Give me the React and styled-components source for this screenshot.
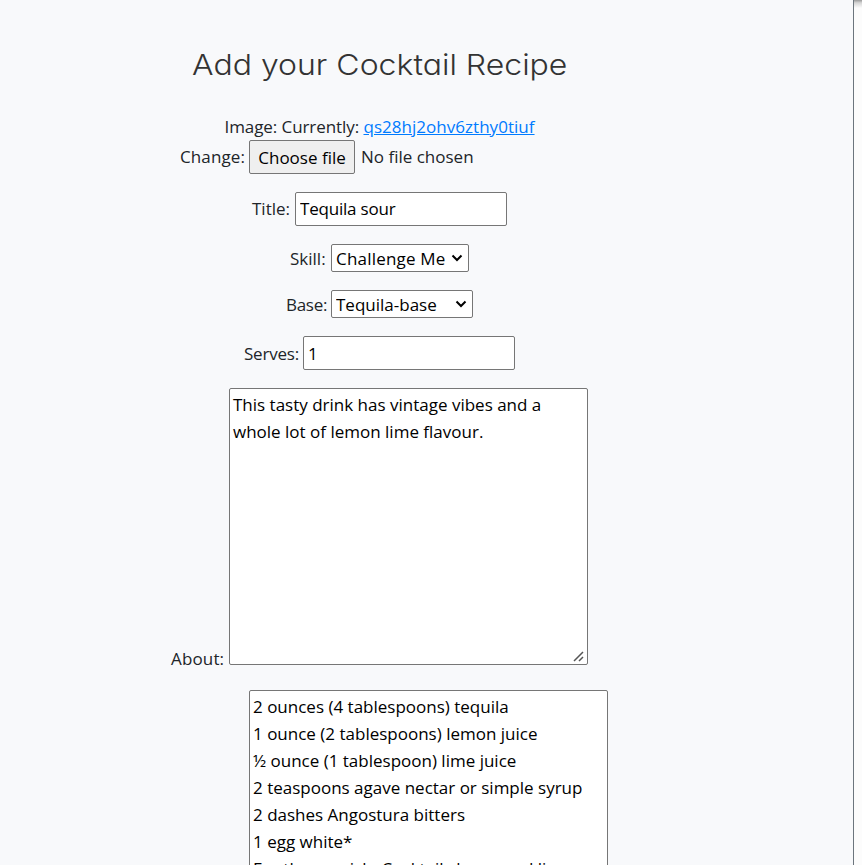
import React from "react";
import styled, { createGlobalStyle } from "styled-components";

const Global = createGlobalStyle`
  * { box-sizing: border-box; }
  html, body { margin: 0; overflow: hidden; }
  body { background: #fcfcfc; }
`;

const Shell = styled.div`
  display: flex;
  width: 862px;
  height: 865px;
  overflow: hidden;
`;

const Page = styled.main`
  flex: none;
  width: 854px;
  background: #f8f9fb;
  border-right: 1px solid #6c757d;
  color: #212529;
  font: 400 17px/27px "Open Sans", "Noto Sans", sans-serif;
`;

const Edge = styled.div`
  flex: 1;
  height: 8px;
  background: linear-gradient(#9a9a9a, #d5d5d5 35%, #fcfcfc);
`;

const Form = styled.form`
  width: 759px;
  padding-top: 42px;
  display: flex;
  flex-direction: column;
  align-items: center;
`;

const Heading = styled.h1`
  margin: 0 0 29px;
  width: 376px;
  height: 43px;
  font: 300 29px/45px Inter, sans-serif;
  font-feature-settings: "cv11";
  white-space: nowrap;
  color: #333;
  transform: scaleX(1.103);
  transform-origin: left;
`;

const Row = styled.div`
  display: flex;
  align-items: ${(p) => p.$align || "center"};
  height: ${(p) => p.$height}px;
  margin-bottom: ${(p) => (p.$gap === undefined ? 18 : p.$gap)}px;
  padding-left: ${(p) => p.$indent || 0}px;
`;

const Text = styled.label`
  flex: none;
  width: ${(p) => p.$width}px;
  padding-bottom: ${(p) => (p.$lift === undefined ? 2 : p.$lift)}px;
  margin-bottom: ${(p) => p.$drop || 0}px;
  letter-spacing: ${(p) => p.$tracking || 0}px;
  white-space: nowrap;
`;

const Link = styled.a`
  width: 171px;
  padding-bottom: 2px;
  color: #007bff;
  letter-spacing: 0.03px;
  text-decoration: underline;
  white-space: nowrap;
`;

const FileButton = styled.button`
  width: 106px;
  height: 34px;
  margin-right: 6px;
  padding: 0;
  border: 1px solid #767676;
  border-radius: 2px;
  background: #efefef;
  color: #000;
  font: inherit;
  white-space: nowrap;
`;

const Input = styled.input`
  width: 212px;
  height: 34px;
  padding: ${(p) => (p.$low ? "0 4px" : "0 4px 2px")};
  border: 1px solid #767676;
  border-radius: 2px;
  background: #fff;
  color: #000;
  font: inherit;
  letter-spacing: -0.2px;
`;

const SelectBox = styled.span`
  position: relative;
  display: flex;
  width: ${(p) => p.$width}px;
  height: 28px;
`;

const Select = styled.select`
  appearance: none;
  width: 100%;
  padding: 0 4px;
  border: 1px solid #767676;
  border-radius: 2px;
  background: #fff;
  color: #000;
  font: inherit;
  letter-spacing: ${(p) => p.$tracking}px;
`;

const Chevron = styled.svg`
  position: absolute;
  right: 6px;
  top: 10px;
  pointer-events: none;
`;

const AreaBox = styled.div`
  position: relative;
  width: 359px;
  height: 277px;
`;

const Area = styled.textarea`
  display: block;
  width: 100%;
  height: 100%;
  padding: 2px 3px;
  border: 1px solid #767676;
  border-radius: 2px;
  background: #fff;
  color: #000;
  font: inherit;
  overflow: hidden;
  resize: none;
`;

const Grip = styled.svg`
  position: absolute;
  right: 3px;
  bottom: 3px;
`;

const ingredients = `2 ounces (4 tablespoons) tequila
1 ounce (2 tablespoons) lemon juice
½ ounce (1 tablespoon) lime juice
2 teaspoons agave nectar or simple syrup
2 dashes Angostura bitters
1 egg white*
For the garnish: Cocktail cherry and lime`;

const about = `This tasty drink has vintage vibes and a
whole lot of lemon lime flavour.`;

function Dropdown({ width, value, tracking }) {
  return (
    <SelectBox $width={width}>
      <Select $tracking={tracking}>
        <option>{value}</option>
      </Select>
      <Chevron width="12" height="8" viewBox="0 0 12 8">
        <path d="M1.5 1.5 6 6l4.5-4.5" fill="none" stroke="#000" strokeWidth="2" />
      </Chevron>
    </SelectBox>
  );
}

function TextArea({ value, label }) {
  return (
    <AreaBox>
      <Area defaultValue={value} aria-label={label} spellCheck={false} />
      <Grip width="12" height="11" viewBox="0 0 12 11">
        <path d="M1 10 10 1M6 10l4-4" fill="none" stroke="#555" strokeWidth="1.5" />
      </Grip>
    </AreaBox>
  );
}

export default function App() {
  return (
    <>
      <Global />
      <Shell>
        <Page>
          <Form>
            <Heading>Add your Cocktail Recipe</Heading>
            <Row $height={26} $gap={0}>
              <Text as="span" $width={139} $tracking={-0.08}>Image: Currently:</Text>
              <Link href="#">qs28hj2ohv6zthy0tiuf</Link>
            </Row>
            <Row $height={34}>
              <Text $width={69} $tracking={0.1}>Change:</Text>
              <FileButton type="button">Choose file</FileButton>
              <Text as="span" $width={218}>No file chosen</Text>
            </Row>
            <Row $height={34}>
              <Text $width={43}>Title:</Text>
              <Input defaultValue="Tequila sour" />
            </Row>
            <Row $height={28}>
              <Text $width={41} $lift={0}>Skill:</Text>
              <Dropdown width={138} value="Challenge Me" tracking={0.2} />
            </Row>
            <Row $height={28}>
              <Text $width={45} $lift={0} $tracking={-0.3}>Base:</Text>
              <Dropdown width={142} value="Tequila-base" tracking={0} />
            </Row>
            <Row $height={34}>
              <Text $width={59} $lift={0} $tracking={-0.2}>Serves:</Text>
              <Input $low defaultValue="1" />
            </Row>
            <Row $height={277} $align="flex-end" $gap={25}>
              <Text $width={58} $lift={0} $drop={-7} $tracking={0.15}>About:</Text>
              <TextArea value={about} label="About" />
            </Row>
            <Row $height={277} $indent={98}>
              <TextArea value={ingredients} label="Ingredients" />
            </Row>
          </Form>
        </Page>
        <Edge />
      </Shell>
    </>
  );
}
